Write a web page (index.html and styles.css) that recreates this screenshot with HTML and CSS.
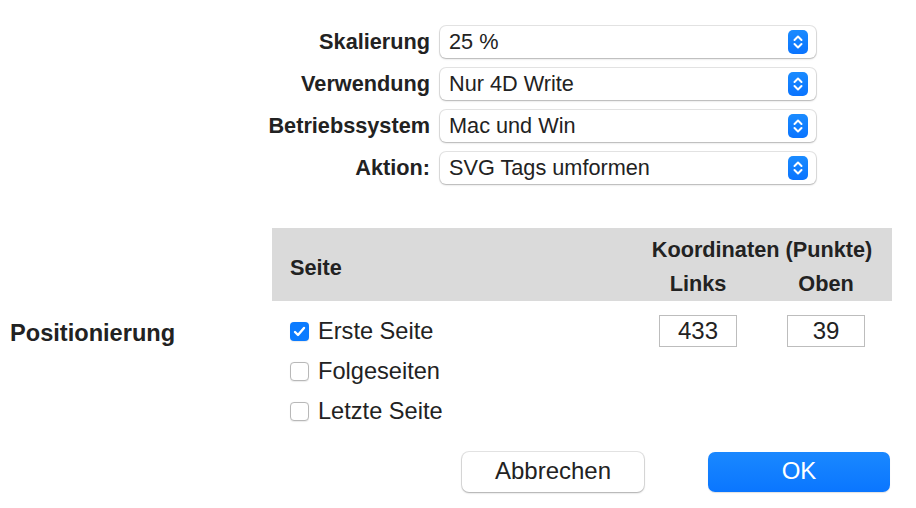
FILE: index.html
```html
<!DOCTYPE html>
<html lang="de">
<head>
<meta charset="utf-8">
<title>Einstellungen</title>
<link rel="stylesheet" href="styles.css">
</head>
<body>
<div class="dialog">
  <div class="settings">
    <div class="label">Skalierung</div>
    <div class="popup"><span>25 %</span><span class="stepper"><svg width="20" height="24" viewBox="0 0 20 24"><path d="M6.5 10 L10 6.5 L13.5 10 M6.5 14 L10 17.5 L13.5 14" fill="none" stroke="#fff" stroke-width="2" stroke-linecap="round" stroke-linejoin="round"/></svg></span></div>
    <div class="label">Verwendung</div>
    <div class="popup"><span>Nur 4D Write</span><span class="stepper"><svg width="20" height="24" viewBox="0 0 20 24"><path d="M6.5 10 L10 6.5 L13.5 10 M6.5 14 L10 17.5 L13.5 14" fill="none" stroke="#fff" stroke-width="2" stroke-linecap="round" stroke-linejoin="round"/></svg></span></div>
    <div class="label">Betriebssystem</div>
    <div class="popup"><span>Mac und Win</span><span class="stepper"><svg width="20" height="24" viewBox="0 0 20 24"><path d="M6.5 10 L10 6.5 L13.5 10 M6.5 14 L10 17.5 L13.5 14" fill="none" stroke="#fff" stroke-width="2" stroke-linecap="round" stroke-linejoin="round"/></svg></span></div>
    <div class="label">Aktion:</div>
    <div class="popup"><span>SVG Tags umformen</span><span class="stepper"><svg width="20" height="24" viewBox="0 0 20 24"><path d="M6.5 10 L10 6.5 L13.5 10 M6.5 14 L10 17.5 L13.5 14" fill="none" stroke="#fff" stroke-width="2" stroke-linecap="round" stroke-linejoin="round"/></svg></span></div>
  </div>

  <div class="position">
    <div class="table-head">
      <div class="th-seite">Seite</div>
      <div class="th-coord">Koordinaten (Punkte)</div>
      <div class="th-links">Links</div>
      <div class="th-oben">Oben</div>
    </div>
    <div class="pos-label">Positionierung</div>
    <div class="table-body">
      <div class="check-row">
        <span class="checkbox checked"><svg width="19" height="19" viewBox="0 0 19 19"><path d="M5 10 L8 13 L14 6" fill="none" stroke="#fff" stroke-width="2.4" stroke-linecap="round" stroke-linejoin="round"/></svg></span>
        <span>Erste Seite</span>
      </div>
      <div class="field">433</div>
      <div class="field">39</div>
      <div class="check-row full">
        <span class="checkbox"></span>
        <span>Folgeseiten</span>
      </div>
      <div class="check-row full">
        <span class="checkbox"></span>
        <span>Letzte Seite</span>
      </div>
    </div>
  </div>

  <div class="buttons">
    <button class="btn">Abbrechen</button>
    <button class="btn primary">OK</button>
  </div>
</div>
</body>
</html>
```

FILE: styles.css
```css
* { box-sizing: border-box; }

html, body {
  margin: 0;
  padding: 0;
  background: #ffffff;
}

body {
  width: 916px;
  height: 508px;
  overflow: hidden;
  font-family: "Liberation Sans", Arial, Helvetica, sans-serif;
  color: #222222;
}

.dialog {
  padding-top: 26px;
}

.settings {
  display: grid;
  grid-template-columns: 430px 376px;
  column-gap: 10px;
  row-gap: 10px;
  align-items: center;
}

.label {
  text-align: right;
  font-weight: bold;
  font-size: 21.7px;
}

.popup {
  height: 32px;
  border-radius: 6px;
  background: #ffffff;
  box-shadow: 0 0 0 1px rgba(0, 0, 0, 0.1), 0 1px 2px rgba(0, 0, 0, 0.22);
  display: flex;
  align-items: center;
  justify-content: space-between;
  padding-left: 9px;
  padding-right: 8px;
  font-size: 21.7px;
}

.stepper {
  width: 20px;
  height: 24px;
  border-radius: 5px;
  background: linear-gradient(#1a8bff, #0a74ff);
  display: flex;
}

.position {
  margin-top: 44px;
  display: grid;
  grid-template-columns: 272px 620px;
}

.table-head {
  grid-column: 2;
  background: #dadada;
  height: 73px;
  display: grid;
  grid-template-columns: 1fr 78px 78px;
  grid-template-rows: 24px 24px;
  column-gap: 50px;
  row-gap: 10px;
  padding: 10px 27px 0 18px;
  font-weight: bold;
  font-size: 21.7px;
  align-items: center;
}

.th-seite {
  grid-row: 1 / 3;
  grid-column: 1;
  align-self: center;
  padding-top: 2px;
}

.th-coord {
  grid-row: 1;
  grid-column: 2 / 4;
  justify-self: center;
  white-space: nowrap;
}

.th-links { grid-row: 2; grid-column: 2; justify-self: center; }
.th-oben  { grid-row: 2; grid-column: 3; justify-self: center; }

.pos-label {
  grid-column: 1;
  padding-left: 10px;
  padding-top: 14px;
  line-height: 36px;
  font-weight: bold;
  font-size: 23.6px;
}

.table-body {
  grid-column: 2;
  display: grid;
  grid-template-columns: 1fr 78px 78px;
  grid-auto-rows: 32px;
  column-gap: 50px;
  row-gap: 8px;
  padding: 14px 27px 0 18px;
  font-size: 23.6px;
}

.check-row {
  display: flex;
  align-items: center;
  gap: 9px;
}

.check-row.full {
  grid-column: 1 / 4;
}

.checkbox {
  flex: none;
  width: 19px;
  height: 19px;
  border-radius: 4px;
  border: 1px solid #b8b8b8;
  background: #ffffff;
  display: flex;
  box-shadow: 0 0.5px 1px rgba(0, 0, 0, 0.08);
}

.checkbox.checked {
  border: none;
  background: #0b7bff;
}

.field {
  border: 1px solid #bdbdbd;
  background: #ffffff;
  display: flex;
  align-items: center;
  justify-content: center;
  font-size: 24px;
}

.buttons {
  margin-top: 25px;
  display: flex;
  justify-content: flex-end;
  gap: 64px;
  padding-right: 26px;
}

.btn {
  width: 182px;
  height: 40px;
  border-radius: 7px;
  border: none;
  background: #ffffff;
  box-shadow: 0 0 0 1px rgba(0, 0, 0, 0.1), 0 1px 2px rgba(0, 0, 0, 0.25);
  font-family: "Liberation Sans", Arial, Helvetica, sans-serif;
  font-size: 24px;
  color: #222222;
  padding: 0 0 3px 0;
}

.btn.primary {
  background: linear-gradient(#1a88ff, #0a76ff);
  color: #ffffff;
  box-shadow: 0 1px 1px rgba(0, 0, 0, 0.12);
}
```
